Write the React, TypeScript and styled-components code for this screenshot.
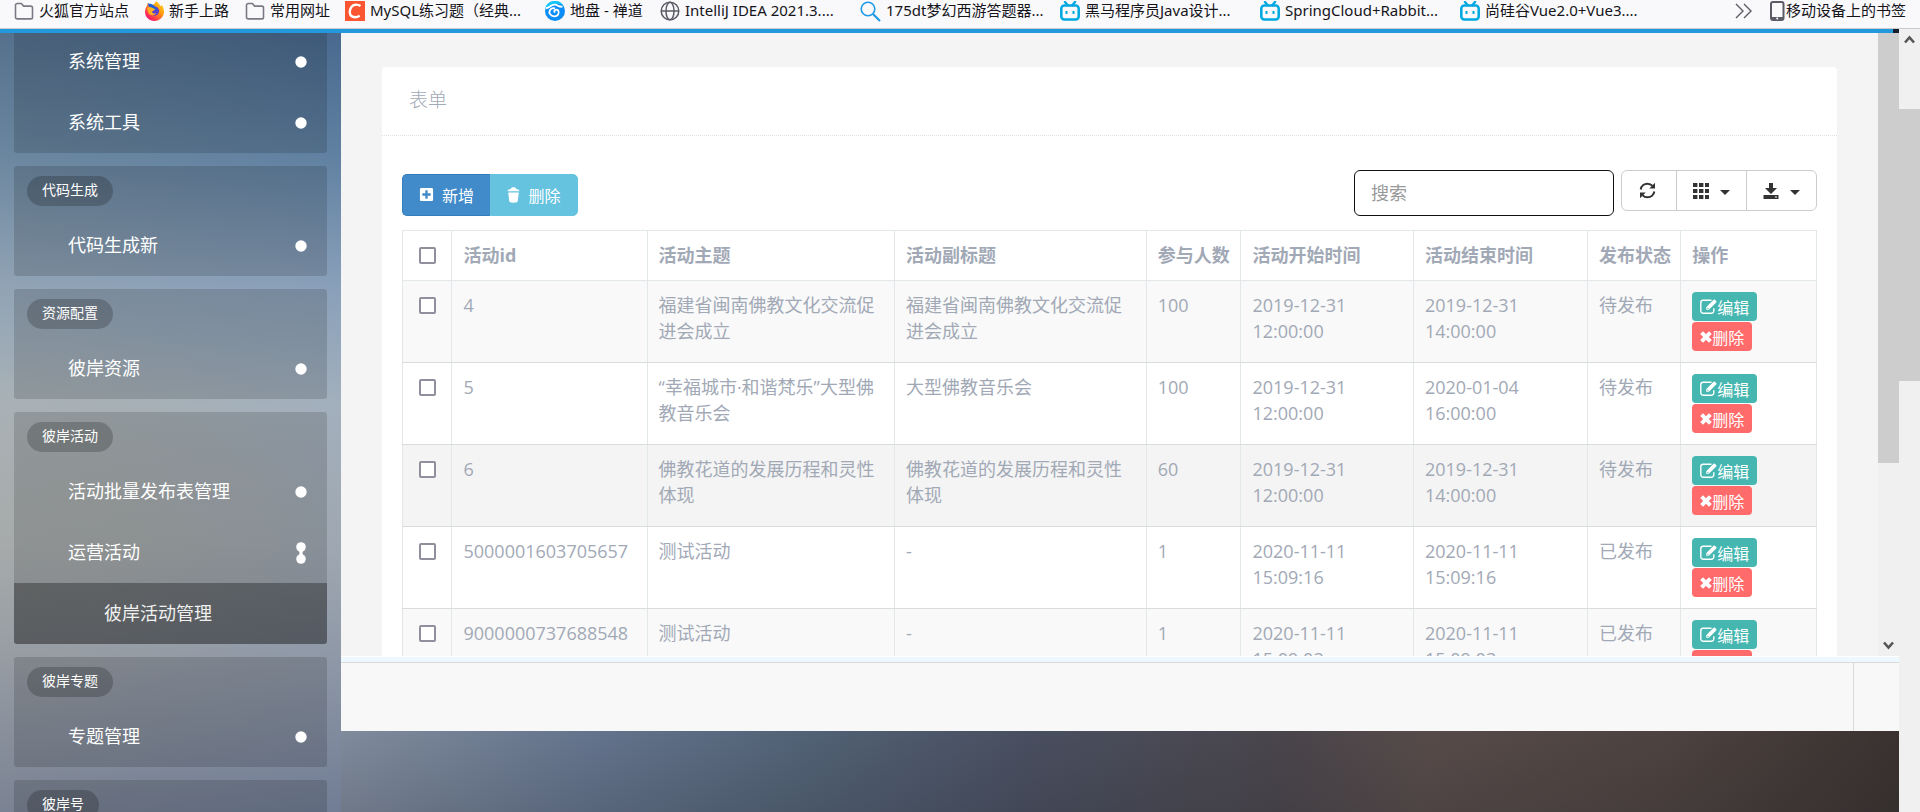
import React from 'react';
import styled, { createGlobalStyle, css } from 'styled-components';
import { FaPlusSquare } from 'react-icons/fa';

const sans = `"Open Sans", "Noto Sans CJK SC", sans-serif`;

const Global = createGlobalStyle`
  *, *::before, *::after { box-sizing: border-box; }
  body { margin: 0; font-family: ${sans}; color: #a2a9b6; }
  button, input { font-family: inherit; }
  a { color: inherit; text-decoration: none; }
  svg { display: block; flex: none; }
`;

const Browser = styled.div`
  display: flex;
  flex-direction: column;
  height: 100vh;
  overflow: hidden;
`;

/* ---------- bookmarks bar ---------- */

const Bookmarks = styled.nav`
  display: flex;
  flex: none;
  height: 29px;
  padding: 0 14px 6px;
  background: #f9f9fb;
  border-bottom: 1px solid #ccc;
  color: #15141a;
  font: 15px/20px "Noto Sans", "Noto Sans CJK SC", sans-serif;
`;

const Bookmark = styled.a<{ $width?: number }>`
  display: flex;
  align-items: center;
  gap: 5px;
  width: ${(p) => (p.$width ? `${p.$width}px` : 'auto')};
  flex: none;
  white-space: nowrap;
`;

const BookmarkLabel = styled.span`
  padding-bottom: 2px;
`;

const BookmarksEnd = styled.div`
  display: flex;
  align-items: center;
  gap: 17px;
  margin-left: auto;
`;

const PlainButton = styled.button`
  display: flex;
  padding: 0;
  border: 0;
  background: none;
  color: #5b5b66;
`;

const MobileLink = styled.a`
  display: flex;
  align-items: center;
`;

/* ---------- page ---------- */

const Viewport = styled.div`
  display: flex;
  flex: 1;
  min-height: 0;
`;

const Page = styled.div`
  position: relative;
  display: flex;
  flex: 1;
  min-width: 0;
  background:
    linear-gradient(to bottom, #48688a 0, #6282a0 16%, #8fa4ba 33%, #aab5bd 48%, #a6acb1 66%, #959ca6 80%, #747e92 100%) left / 341px 100% no-repeat,
    linear-gradient(to bottom, rgba(0, 0, 0, 0) 88%, rgba(30, 32, 40, 0.18) 100%),
    linear-gradient(97deg, #8a94a3 18%, #66768f 34%, #536377 45%, #4a5061 56%, #4b464c 69%, #584c4a 76%, #4e4340 88%, #3a3230 100%);
`;

const LoadingBar = styled.div`
  position: absolute;
  z-index: 1;
  top: 0;
  left: 0;
  right: 0;
  height: 4px;
  background: #2299dd;
  border-right: 6px solid #15202c;
`;

const Sidebar = styled.aside`
  display: flex;
  flex: none;
  flex-direction: column;
  gap: 13px;
  width: 341px;
  padding: 0 14px;
  overflow: hidden;
  background:
    radial-gradient(ellipse 220px 180px at 30% 62%, rgba(176, 170, 150, 0.22), rgba(176, 170, 150, 0)),
    linear-gradient(to right, rgba(160, 160, 150, 0.14), rgba(70, 110, 180, 0.08));
`;

const MenuBlock = styled.section`
  flex: none;
  border-radius: 0 0 3px 3px;
  background: rgba(0, 0, 0, 0.14);
  overflow: hidden;

  &:first-child { padding-top: 2px; }
  & + & { border-radius: 3px; }
`;

const MenuHead = styled.div`
  height: 49px;
  padding: 10px 13px 0;
`;

const MenuTag = styled.h2`
  display: inline-block;
  margin: 0;
  padding: 0 15px 2px;
  border-radius: 15px;
  background: rgba(0, 0, 0, 0.2);
  color: #fff;
  font-size: 14px;
  font-weight: 400;
  line-height: 28px;
  vertical-align: top;
`;

const MenuItem = styled.a<{ $active?: boolean }>`
  display: flex;
  align-items: center;
  justify-content: space-between;
  height: 61px;
  padding: 0 20px 0 54px;
  color: #fff;
  font-size: 18px;
  ${(p) => p.$active && css`
    padding-left: 90px;
    background: rgba(0, 0, 0, 0.31);
    color: #f0f0f0;
  `}
`;

const MenuLabel = styled.span`
  padding-bottom: 4px;
`;

const Main = styled.div`
  display: flex;
  flex: 1;
  flex-direction: column;
  min-width: 0;
  padding-bottom: 81px;
`;

const Frame = styled.div`
  display: flex;
  flex: 1;
  min-height: 0;
  background: #f4f4f4;
  border-bottom: 1px solid #fff;
`;

const FrameBody = styled.main`
  flex: 1;
  min-width: 0;
  overflow: hidden;
  padding: 38px 41px 0;
`;

const Card = styled.section`
  min-height: 100%;
  background: #fff;
  border-radius: 4px 4px 0 0;
`;

const CardTitle = styled.h1`
  margin: 0;
  padding: 20px 27px 21px;
  border-bottom: 1px dotted #dde0e2;
  font-size: 19px;
  font-weight: 300;
  line-height: 27px;
`;

const CardBody = styled.div`
  padding: 34px 20px 0;
`;

const Toolbar = styled.div`
  display: flex;
  justify-content: space-between;
  align-items: flex-end;
  margin-bottom: 14px;
`;

const Group = styled.div`
  display: flex;
`;

const ActionButton = styled.button<{ $tone: 'primary' | 'info' }>`
  display: flex;
  align-items: center;
  justify-content: center;
  gap: 8px;
  width: 88px;
  height: 42px;
  padding: 0 0 1px;
  color: #fff;
  font-size: 16px;
  border: 1px solid;
  ${(p) => p.$tone === 'primary'
    ? css`background: #428bca; border-color: #357ebd; border-right: 0; border-radius: 5px 0 0 5px;`
    : css`background: #65c3df; border-color: #65c3df; border-radius: 0 5px 5px 0;`}
`;

const Tools = styled.div`
  display: flex;
  align-items: flex-start;
  gap: 7px;
`;

const Search = styled.input`
  width: 260px;
  height: 46px;
  padding: 0 16px;
  border: 1px solid #111;
  border-radius: 6px;
  background: #fff;
  font-size: 18px;
  color: #555;
  &::placeholder { color: #999; opacity: 1; }
`;

const ToolButton = styled.button<{ $wide?: boolean }>`
  display: flex;
  align-items: center;
  justify-content: center;
  gap: 11px;
  width: ${(p) => (p.$wide ? 71 : 56)}px;
  height: 41px;
  padding: 0 4px 0 0;
  border: 1px solid #ccc;
  background: #fff;
  color: #333;
  & + & { margin-left: -1px; padding: 0; }
  &:first-child { border-radius: 6px 0 0 6px; }
  &:last-child { border-radius: 0 6px 6px 0; }
`;

const Caret = styled.span`
  margin-top: 3px;
  border: 5px solid transparent;
  border-top-color: currentColor;
  border-bottom: 0;
`;

const Table = styled.table`
  width: 100%;
  table-layout: fixed;
  border-collapse: collapse;
  font-size: 18px;
`;

const Col = styled.col<{ $share: number }>`
  width: ${(p) => p.$share}%;
`;

const Th = styled.th`
  padding: 12px 0 12px 11px;
  border: 1px solid #e2e7ea;
  font-weight: 700;
  line-height: 25px;
  text-align: left;
  white-space: nowrap;
`;

const Td = styled.td`
  padding: 11px;
  border: 1px solid #e2e7ea;
  border-bottom-color: #d9dbdd;
  border-top-color: #d9dbdd;
  line-height: 26px;
  vertical-align: top;
`;

const Tr = styled.tr<{ $shade: string }>`
  background: ${(p) => p.$shade};
  &:first-child ${Td} { border-top-color: #e2e7ea; }
`;

const Check = styled.input`
  appearance: none;
  display: block;
  width: 17px;
  height: 17px;
  margin: 5px;
  border: 2px solid #8f8f9d;
  border-radius: 2px;
  background: #fff;
  th & { margin: 4px 5px; }
`;

const RowActions = styled.div`
  display: flex;
  flex-direction: column;
  align-items: flex-start;
  gap: 1px;
`;

const RowButton = styled.button<{ $danger?: boolean }>`
  display: flex;
  align-items: center;
  height: 29px;
  padding: 0 8px;
  border: 0;
  border-radius: 4px;
  background: ${(p) => (p.$danger ? '#ff6b6b' : '#45b6b0')};
  color: #fff;
  font-size: 16px;
`;

const StatusStrip = styled.div`
  flex: none;
  height: 5px;
  background: #eef8ff;
`;

const Footer = styled.footer`
  display: flex;
  flex: none;
  justify-content: flex-end;
  height: 69px;
  background: #f8f8f8;
  border-top: 1px solid #dadada;
`;

const FooterCell = styled.div`
  width: 46px;
  border-left: 1px solid #dadada;
`;

/* ---------- scrollbars ---------- */

const ScrollTrack = styled.div`
  display: flex;
  flex: none;
  flex-direction: column;
  align-items: center;
  width: 21px;
  padding-top: 4px;
  background: #f0f0f0;
  color: #555;
`;

const OuterTrack = styled(ScrollTrack)`
  padding-top: 6px;
  gap: 65px;
`;

const Thumb = styled.div<{ $share: number }>`
  width: 100%;
  height: ${(p) => p.$share}%;
  background: #cdcdcd;
`;

const TrackEnd = styled.div`
  margin-top: auto;
  padding-bottom: 6px;
`;

/* ---------- drawings ---------- */

const Folder = () => (
  <svg width="20" height="20" viewBox="0 0 20 20" fill="none" stroke="#7a7a85" strokeWidth="1.6">
    <path d="M1.5 4.2a1.7 1.7 0 0 1 1.7-1.7h4.2l2.2 2.6h7.2a1.7 1.7 0 0 1 1.7 1.7v9.4a1.7 1.7 0 0 1-1.7 1.7H3.2a1.7 1.7 0 0 1-1.7-1.7z" />
  </svg>
);

const Firefox = () => (
  <svg width="19" height="20" viewBox="0 0 19 20">
    <defs>
      <linearGradient id="fx" x1="1" y1="0" x2="0.2" y2="1">
        <stop offset="0" stopColor="#ffe226" />
        <stop offset="0.45" stopColor="#ff980e" />
        <stop offset="0.8" stopColor="#ff3750" />
        <stop offset="1" stopColor="#eb0878" />
      </linearGradient>
    </defs>
    <path fill="url(#fx)" d="M11 0c3 2 4 4 4.600 5.200.8-.2 1-.8 1-1.400C18 5.500 19 8 19 10.600 19 16 14.800 20 9.500 20S0 16 0 10.800C0 8 1 6 2.200 4.200c0-1 .2-1.700.6-2.200.4 1 1 1.600 1.600 2 1-.5 2.200-.4 3 0C8.600 3.500 10.500 2 11 0z" />
    <circle cx="9.500" cy="10" r="4.600" fill="#5a3fd0" />
    <path fill="#1f5fd8" d="M2.800 2.500C5 2.200 8 3 9.500 5l3 4-3.500.5L4 6z" />
    <path fill="#ffb020" d="M2.500 6.500c2.500-.6 4.500 0 6 1 1 .2 1.600.6 1.400 1.200-.8 1-2.400.8-3 2.200.6 1.600 3 2 4.600.8-1 3-6.400 3.400-8 .2-.8-1.700-1.400-3.700-1-5.400z" />
  </svg>
);

const CsdnBox = styled.span`
  display: flex;
  align-items: center;
  justify-content: center;
  width: 20px;
  height: 20px;
  background: #fc5531;
`;

const Csdn = () => (
  <CsdnBox>
    <svg width="14" height="16" viewBox="0 0 14 16" fill="none" stroke="#fff" strokeWidth="2.400">
      <path d="M12.500 3C9.500 1 5.500 1.200 3.400 4 1 7.500 1.200 12 4 13.400c2.400 1.200 5.500.8 7.700-.6" />
    </svg>
  </CsdnBox>
);

const Zentao = () => (
  <svg width="20" height="20" viewBox="0 0 20 20">
    <circle cx="10" cy="10" r="10" fill="#0c8cf5" />
    <path d="M0 8a10 10 0 0 1 19-2 8 8 0 0 0-8-3C6 4 5 7 0 8z" fill="#19c6fa" />
    <g fill="none" stroke="#fff" strokeWidth="1.800" strokeLinecap="round">
      <path d="M1.500 7c3 .2 4-3.300 8-3.300 3.500 0 4.300 2.600 7.300 2" />
      <path d="M9.500 11c-.8-1.800 1.800-3.400 3.700-1.500 1.700 2.500-.5 6-4 5.800-3.500-.2-5.700-3.200-4.500-5.700.8-1.700 2.600-2.600 4.600-2.400" />
    </g>
  </svg>
);

const Globe = () => (
  <svg width="20" height="20" viewBox="0 0 20 20" fill="none" stroke="#5b5b66" strokeWidth="1.500">
    <circle cx="10" cy="10" r="8.800" />
    <ellipse cx="10" cy="10" rx="4" ry="8.800" />
    <path d="M1.200 10h17.600" />
  </svg>
);

const Lens = () => (
  <svg width="21" height="21" viewBox="0 0 21 21" fill="none" stroke="#1f9be6">
    <circle cx="8" cy="8" r="6.800" strokeWidth="1.600" />
    <path d="M13 13l7 7" strokeWidth="2.200" />
  </svg>
);

const Bili = () => (
  <svg width="20" height="20" viewBox="0 0 20 20" fill="none" stroke="#00a8e1">
    <path d="M5 1l2.500 3M15 1l-2.500 3" strokeWidth="2.400" strokeLinecap="round" />
    <rect x="1.300" y="4.500" width="17.400" height="14" rx="3" strokeWidth="2.500" />
    <path d="M6.500 10v3M13.500 10v3" strokeWidth="2" />
  </svg>
);

const Mobile = () => (
  <svg width="17" height="20" viewBox="0 0 17 20">
    <rect x="2" y="1" width="12.500" height="18" rx="2" fill="none" stroke="#5b5b66" strokeWidth="2" />
    <path d="M2 16h12.500v3H2z" fill="#5b5b66" />
    <circle cx="8.200" cy="17.500" r="1" fill="#fff" />
  </svg>
);

const DoubleChevron = () => (
  <svg width="17" height="16" viewBox="0 0 17 16" fill="none" stroke="currentColor" strokeWidth="1.400">
    <path d="M1 1l7 7-7 7M9 1l7 7-7 7" />
  </svg>
);

const Dot = () => (
  <svg width="12" height="12" viewBox="0 0 12 12"><circle cx="6" cy="6" r="5.700" fill="#fff" /></svg>
);

const DotPair = () => (
  <svg width="12" height="22" viewBox="0 0 12 22" fill="#fff">
    <circle cx="6" cy="5" r="4.800" />
    <circle cx="6" cy="17" r="4.800" />
    <path d="M3.500 8.500Q5.500 11 3.500 13.500h5Q6.500 11 8.500 8.500z" />
  </svg>
);

const Trash = () => (
  <svg width="13" height="16" viewBox="0 0 13 16" fill="#fff">
    <path d="M.5 4.300C.5 3 2 2.200 3.600 2 4 .8 5 .2 6.500.2S9 .8 9.400 2c1.600.2 3.100 1 3.100 2.300z" />
    <path d="M1.200 5.500h10.600l-1 8.600c-.1 1.100-1.500 1.700-4.300 1.700s-4.200-.6-4.300-1.700z" />
  </svg>
);

const Pencil = () => (
  <svg width="17" height="17" viewBox="0 0 17 17" fill="none" stroke="#fff" strokeWidth="1.400">
    <path d="M11.500 2.200H3.200A2.400 2.400 0 0 0 .8 4.600v8.200a2.400 2.400 0 0 0 2.400 2.400h8.200a2.400 2.400 0 0 0 2.400-2.400v-2.600" />
    <path d="M6.200 9.200L13.500 1.800a1 1 0 0 1 1.400 0l1.300 1.300a1 1 0 0 1 0 1.400L8.900 11.800H6.200z" fill="#fff" stroke="none" />
    <path d="M7.200 9.800l1.200 1.200" stroke="#45b6b0" strokeWidth="1" />
  </svg>
);

const Cross = () => (
  <svg width="12" height="12" viewBox="0 0 12 12" fill="none" stroke="#fff" strokeWidth="4">
    <path d="M1.600 1.600l8.800 8.800M10.400 1.600l-8.800 8.800" />
  </svg>
);

const Refresh = () => (
  <svg width="17" height="17" viewBox="0 0 17 17" fill="none" stroke="currentColor" strokeWidth="2">
    <path d="M1.700 7.500C2.200 4 5 1.700 8.500 1.700c2 0 3.800.8 5 2.200M15.300 9.500c-.5 3.500-3.300 5.800-6.800 5.800-2 0-3.800-.8-5-2.200" />
    <path d="M16 .8v5.700h-5.700zM1 16.200v-5.700h5.700z" fill="currentColor" stroke="none" />
  </svg>
);

const Grid = () => (
  <svg width="16" height="16" viewBox="0 0 16 16" fill="currentColor">
    {[0, 6, 12].map((y) => [0, 6, 12].map((x) => <rect key={`${x}-${y}`} x={x} y={y} width="4.400" height="4" />))}
  </svg>
);

const Save = () => (
  <svg width="16" height="16" viewBox="0 0 16 16" fill="currentColor">
    <path d="M6 0h4v5h4l-6 6-6-6h4zM.5 12h15v4H.5z" />
    <rect x="12" y="13.500" width="2" height="1" fill="#fff" />
  </svg>
);

const Arrow = ({ down }: { down?: boolean }) => (
  <svg width="11" height="9" viewBox="0 0 11 9" fill="none" stroke="currentColor" strokeWidth="2.600">
    <path d={down ? 'M1 1.500l4.500 5 4.500-5' : 'M1 7.500l4.500-5 4.500 5'} />
  </svg>
);

/* ---------- data ---------- */

const bookmarks: { icon: React.ReactNode; label: string; width?: number }[] = [
  { icon: <Folder />, label: '火狐官方站点', width: 131 },
  { icon: <Firefox />, label: '新手上路', width: 100 },
  { icon: <Folder />, label: '常用网址', width: 100 },
  { icon: <Csdn />, label: 'MySQL练习题（经典...', width: 200 },
  { icon: <Zentao />, label: '地盘 - 禅道', width: 115 },
  { icon: <Globe />, label: 'IntelliJ IDEA 2021.3....', width: 200 },
  { icon: <Lens />, label: '175dt梦幻西游答题器...', width: 200 },
  { icon: <Bili />, label: '黑马程序员Java设计...', width: 200 },
  { icon: <Bili />, label: 'SpringCloud+Rabbit...', width: 200 },
  { icon: <Bili />, label: '尚硅谷Vue2.0+Vue3....' },
];

type Item = { label: string; open?: boolean; active?: boolean };

const menu: { tag?: string; items: Item[] }[] = [
  { items: [{ label: '系统管理' }, { label: '系统工具' }] },
  { tag: '代码生成', items: [{ label: '代码生成新' }] },
  { tag: '资源配置', items: [{ label: '彼岸资源' }] },
  {
    tag: '彼岸活动',
    items: [
      { label: '活动批量发布表管理' },
      { label: '运营活动', open: true },
      { label: '彼岸活动管理', active: true },
    ],
  },
  { tag: '彼岸专题', items: [{ label: '专题管理' }] },
  { tag: '彼岸号', items: [] },
];

const shares = [3.5, 13.8, 17.5, 17.8, 6.7, 12.2, 12.3, 6.6, 9.6];
const heads = ['活动id', '活动主题', '活动副标题', '参与人数', '活动开始时间', '活动结束时间', '发布状态', '操作'];

const rows = [
  { shade: '#f9f9f9', cells: ['4', '福建省闽南佛教文化交流促进会成立', '福建省闽南佛教文化交流促进会成立', '100', '2019-12-31 12:00:00', '2019-12-31 14:00:00', '待发布'] },
  { shade: '#fff', cells: ['5', '“幸福城市·和谐梵乐”大型佛教音乐会', '大型佛教音乐会', '100', '2019-12-31 12:00:00', '2020-01-04 16:00:00', '待发布'] },
  { shade: '#f4f4f4', cells: ['6', '佛教花道的发展历程和灵性体现', '佛教花道的发展历程和灵性体现', '60', '2019-12-31 12:00:00', '2019-12-31 14:00:00', '待发布'] },
  { shade: '#fff', cells: ['5000001603705657', '测试活动', '-', '1', '2020-11-11 15:09:16', '2020-11-11 15:09:16', '已发布'] },
  { shade: '#f9f9f9', cells: ['9000000737688548', '测试活动', '-', '1', '2020-11-11 15:09:03', '2020-11-11 15:09:03', '已发布'] },
];

export default function App() {
  return (
    <Browser>
      <Global />
      <Bookmarks>
        {bookmarks.map((b) => (
          <Bookmark key={b.label} href="#" $width={b.width}>
            {b.icon}
            <BookmarkLabel>{b.label}</BookmarkLabel>
          </Bookmark>
        ))}
        <BookmarksEnd>
          <PlainButton aria-label="更多书签"><DoubleChevron /></PlainButton>
          <MobileLink href="#"><Mobile /><BookmarkLabel>移动设备上的书签</BookmarkLabel></MobileLink>
        </BookmarksEnd>
      </Bookmarks>
      <Viewport>
        <Page>
          <LoadingBar />
          <Sidebar>
            {menu.map((block, i) => (
              <MenuBlock key={i}>
                {block.tag && <MenuHead><MenuTag>{block.tag}</MenuTag></MenuHead>}
                {block.items.map((item) => (
                  <MenuItem key={item.label} href="#" $active={item.active}>
                    <MenuLabel>{item.label}</MenuLabel>
                    {!item.active && (item.open ? <DotPair /> : <Dot />)}
                  </MenuItem>
                ))}
              </MenuBlock>
            ))}
          </Sidebar>
          <Main>
            <Frame>
              <FrameBody>
                <Card>
                  <CardTitle>表单</CardTitle>
                  <CardBody>
                    <Toolbar>
                      <Group>
                        <ActionButton $tone="primary"><FaPlusSquare size={15} />新增</ActionButton>
                        <ActionButton $tone="info"><Trash />删除</ActionButton>
                      </Group>
                      <Tools>
                        <Search type="text" placeholder="搜索" aria-label="搜索" />
                        <Group>
                          <ToolButton aria-label="刷新"><Refresh /></ToolButton>
                          <ToolButton $wide aria-label="列"><Grid /><Caret /></ToolButton>
                          <ToolButton $wide aria-label="导出"><Save /><Caret /></ToolButton>
                        </Group>
                      </Tools>
                    </Toolbar>
                    <Table>
                      <colgroup>{shares.map((s, i) => <Col key={i} $share={s} />)}</colgroup>
                      <thead>
                        <tr>
                          <Th><Check type="checkbox" aria-label="全选" /></Th>
                          {heads.map((h) => <Th key={h}>{h}</Th>)}
                        </tr>
                      </thead>
                      <tbody>
                        {rows.map((r) => (
                          <Tr key={r.cells[0]} $shade={r.shade}>
                            <Td><Check type="checkbox" aria-label={`选择 ${r.cells[0]}`} /></Td>
                            {r.cells.map((c, i) => <Td key={i}>{c}</Td>)}
                            <Td>
                              <RowActions>
                                <RowButton><Pencil />编辑</RowButton>
                                <RowButton $danger><Cross />删除</RowButton>
                              </RowActions>
                            </Td>
                          </Tr>
                        ))}
                      </tbody>
                    </Table>
                  </CardBody>
                </Card>
              </FrameBody>
              <ScrollTrack>
                <Thumb $share={69} />
                <TrackEnd><Arrow down /></TrackEnd>
              </ScrollTrack>
            </Frame>
            <StatusStrip />
            <Footer><FooterCell /></Footer>
          </Main>
        </Page>
        <OuterTrack>
          <Arrow />
          <Thumb $share={35} />
        </OuterTrack>
      </Viewport>
    </Browser>
  );
}
